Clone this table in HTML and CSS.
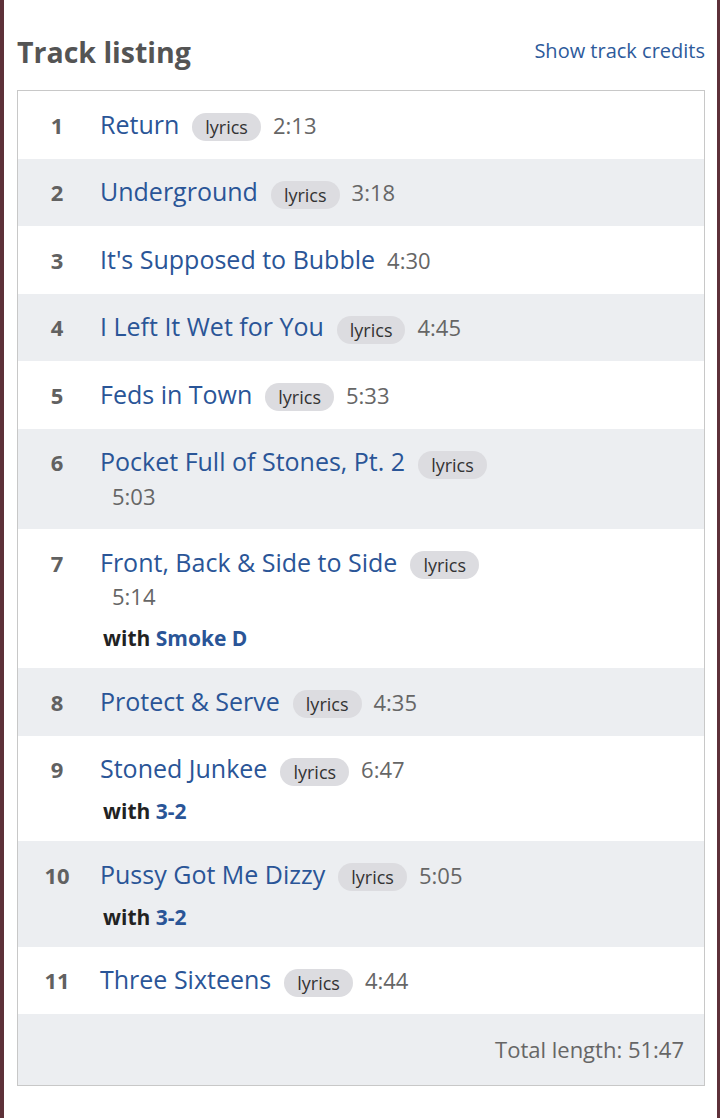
FILE: index.html
```html
<!DOCTYPE html>
<html>
<head>
<meta charset="utf-8">
<link rel="stylesheet" href="styles.css">
</head>
<body>
<div class="page">
  <div class="header">
    <h2 class="heading">Track listing</h2>
    <a class="credits-link">Show track credits</a>
  </div>
  <div class="tracks">
    <div class="track">
      <div class="num">1</div>
      <div class="info"><div class="line"><a class="title">Return</a><span class="pill">lyrics</span><span class="dur">2:13</span></div></div>
    </div>
    <div class="track alt">
      <div class="num">2</div>
      <div class="info"><div class="line"><a class="title">Underground</a><span class="pill">lyrics</span><span class="dur">3:18</span></div></div>
    </div>
    <div class="track">
      <div class="num">3</div>
      <div class="info"><div class="line"><a class="title">It's Supposed to Bubble</a><span class="dur">4:30</span></div></div>
    </div>
    <div class="track alt">
      <div class="num">4</div>
      <div class="info"><div class="line"><a class="title">I Left It Wet for You</a><span class="pill">lyrics</span><span class="dur">4:45</span></div></div>
    </div>
    <div class="track">
      <div class="num">5</div>
      <div class="info"><div class="line"><a class="title">Feds in Town</a><span class="pill">lyrics</span><span class="dur">5:33</span></div></div>
    </div>
    <div class="track alt">
      <div class="num">6</div>
      <div class="info"><div class="line"><a class="title">Pocket Full of Stones, Pt. 2</a><span class="pill">lyrics</span><span class="dur">5:03</span></div></div>
    </div>
    <div class="track">
      <div class="num">7</div>
      <div class="info"><div class="line"><a class="title">Front, Back &amp; Side to Side</a><span class="pill">lyrics</span><span class="dur">5:14</span></div>
      <div class="with">with <a class="artist">Smoke D</a></div></div>
    </div>
    <div class="track alt">
      <div class="num">8</div>
      <div class="info"><div class="line"><a class="title">Protect &amp; Serve</a><span class="pill">lyrics</span><span class="dur">4:35</span></div></div>
    </div>
    <div class="track">
      <div class="num">9</div>
      <div class="info"><div class="line"><a class="title">Stoned Junkee</a><span class="pill">lyrics</span><span class="dur">6:47</span></div>
      <div class="with">with <a class="artist">3-2</a></div></div>
    </div>
    <div class="track alt">
      <div class="num">10</div>
      <div class="info"><div class="line"><a class="title">Pussy Got Me Dizzy</a><span class="pill">lyrics</span><span class="dur">5:05</span></div>
      <div class="with">with <a class="artist">3-2</a></div></div>
    </div>
    <div class="track">
      <div class="num">11</div>
      <div class="info"><div class="line"><a class="title">Three Sixteens</a><span class="pill">lyrics</span><span class="dur">4:44</span></div></div>
    </div>
    <div class="total">Total length: 51:47</div>
  </div>
</div>
</body>
</html>
```
FILE: styles.css
```css
html, body {
  margin: 0;
  padding: 0;
  background: #ffffff;
}
body {
  font-family: "Open Sans", Lato, sans-serif;
  border-left: 4px solid #5d3139;
  border-right: 3px solid #5d3139;
  min-height: 1118px;
  box-sizing: border-box;
}
.page {
  padding: 30px 12px 30px 13px;
}
.header {
  display: flex;
  justify-content: space-between;
  align-items: center;
  height: 44px;
  margin-bottom: 16px;
}
.heading {
  margin: 0;
  font-size: 28.5px;
  font-weight: 700;
  color: #545454;
}
.credits-link {
  color: #2d5a9b;
  font-size: 20px;
  margin-top: -4px;
}
.tracks {
  border: 1px solid #c8c8c8;
}
.track {
  display: flex;
  padding: 16.75px 0 16.75px 0;
  background: #ffffff;
}
.track.alt {
  background: #eceef1;
}
.num {
  width: 78px;
  flex: none;
  text-align: center;
  font-size: 22px;
  font-weight: 700;
  color: #616161;
  line-height: 34px;
}
.info {
  width: 410px;
  padding-left: 4px;
}
.line {
  font-size: 25px;
  line-height: 33px;
}
.title {
  color: #2a5597;
}
.pill {
  display: inline-block;
  background: #dcdce0;
  color: #333;
  font-size: 18px;
  line-height: 28px;
  height: 28px;
  padding: 0 13px;
  border-radius: 14px;
  margin-left: 13px;
  vertical-align: middle;
}
.dur {
  color: #666;
  font-size: 22px;
  display: inline-block;
  margin-left: 12px;
}
.with {
  font-size: 21px;
  font-weight: 700;
  color: #222;
  line-height: 26px;
  margin-top: 12px;
  padding-left: 3px;
}
.artist {
  color: #2a5597;
}
.total {
  background: #eceef1;
  text-align: right;
  font-size: 22px;
  color: #666;
  padding: 20px 20px 20px 0;
  line-height: 31px;
}
```
